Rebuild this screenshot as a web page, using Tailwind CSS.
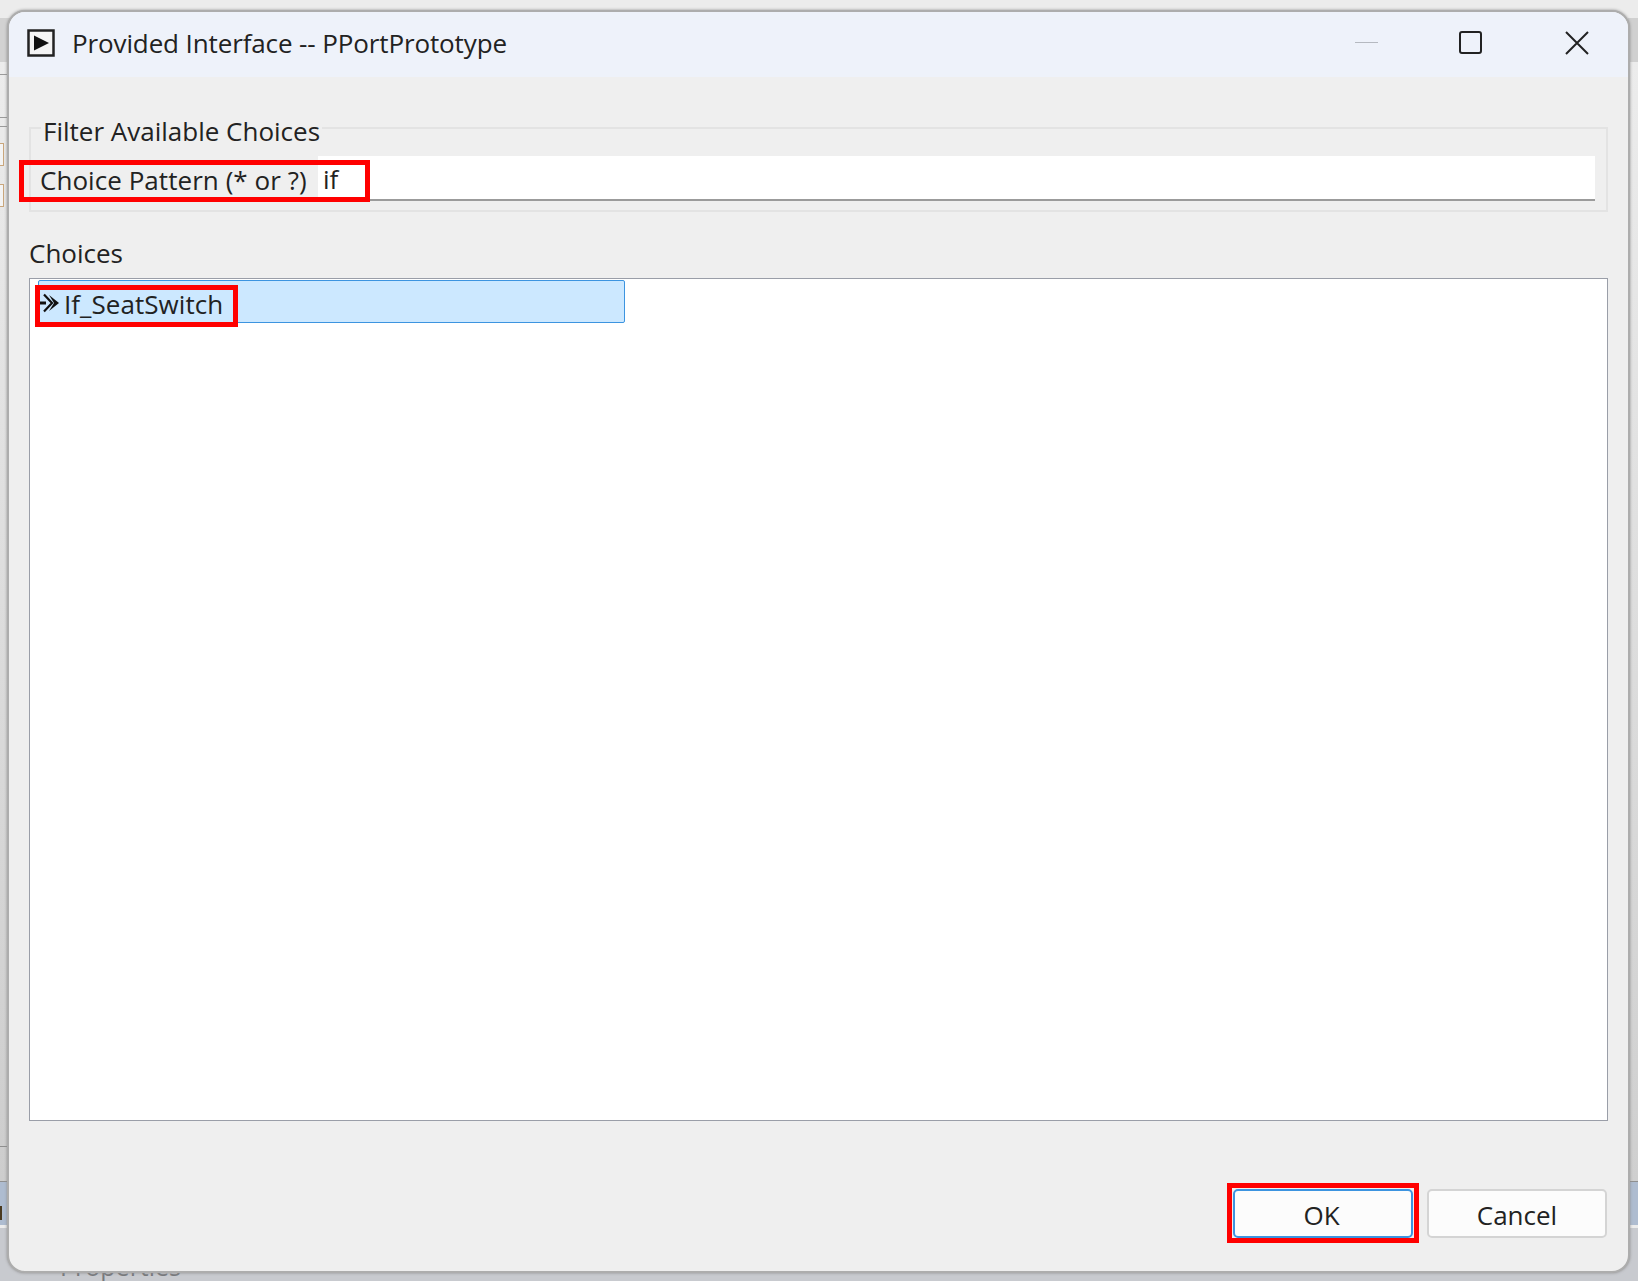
<!DOCTYPE html>
<html>
<head>
<meta charset="utf-8">
<script src="https://cdn.jsdelivr.net/npm/@tailwindcss/browser@4"></script>
</head>
<body class="m-0 overflow-hidden">
<div class="relative w-[1638px] h-[1281px] overflow-hidden bg-[#ececec] font-['Open_Sans',sans-serif] text-[#1a1a1a]">
  <!-- backdrop application peeking out round the window -->
  <div class="absolute left-0 top-[18px] w-[10px] h-[44px] bg-[#d2d2d2]"></div>
  <div class="absolute right-0 top-[18px] w-[10px] h-[44px] bg-[#d0d0d0]"></div>
  <div class="absolute left-0 top-[62px] w-[8px] h-[1120px] bg-linear-to-b from-[#ececec] to-[#cdcdcd]"></div>
  <div class="absolute right-0 top-[62px] w-[10px] h-[1120px] bg-linear-to-b from-[#ececec] to-[#cfcfcf]"></div>
  <div class="absolute left-0 top-[74px] w-[8px] h-[1px] bg-[#9a9a9a]"></div>
  <div class="absolute left-0 top-[117px] w-[8px] h-[1px] bg-[#9a9a9a]"></div>
  <div class="absolute left-0 top-[126px] w-[8px] h-[1px] bg-[#9a9a9a]"></div>
  <div class="absolute left-0 top-[143px] w-[4px] h-[23px] border border-l-0 border-[#c9a67c] bg-[#f4f4f4]"></div>
  <div class="absolute left-0 top-[184px] w-[4px] h-[23px] border border-l-0 border-[#c9a67c] bg-[#f4f4f4]"></div>
  <div class="absolute left-0 top-[1146px] w-[8px] h-[1px] bg-[#8f8f8f]"></div>
  <div class="absolute left-0 right-0 top-[1181px] h-[1px] bg-[#8f8f8f]"></div>
  <div class="absolute left-0 right-0 top-[1182px] h-[43px] bg-[#aebcd0]"></div>
  <div class="absolute left-0 top-[1206px] w-[2px] h-[14px] bg-[#4a3a20]"></div>
  <div class="absolute left-0 right-0 top-[1228px] bottom-0 bg-[#c8cacf]"></div>
  <div class="absolute left-[60px] top-[1251px] text-[25px] leading-[30px] whitespace-nowrap text-[#77797d]">Properties</div>

  <!-- dialog window -->
  <div class="absolute left-[7px] top-[10px] w-[1623px] h-[1263px] rounded-[18px] border-2 border-[#adadad] bg-[#efefef] overflow-hidden flex flex-col shadow-[0_0_3px_#8f8f8f]">
    <div class="h-[65px] shrink-0 bg-[#eef2fa] flex items-center pl-[18px] pb-[4px]">
      <svg width="28" height="28" viewBox="0 0 28 28" class="shrink-0">
        <rect x="1.5" y="1.5" width="25" height="25" fill="#f4f4f4" stroke="#222" stroke-width="2.5"/>
        <path d="M7 6.5 L22 14 L7 21.5 Z" fill="#111"/>
      </svg>
      <span class="ml-[17px] text-[26px] leading-[34px] tracking-[-0.12px] text-[#222]">Provided Interface -- PPortPrototype</span>
      <div class="ml-auto flex items-center h-full">
        <div class="w-[23px] h-[1px] bg-[#b5b9c0] mr-[81px]"></div>
        <div class="w-[23px] h-[23px] rounded-[3px] border-[2.5px] border-[#222] mr-[83px]"></div>
        <svg width="24" height="24" viewBox="0 0 24 24" class="mr-[39px]"><path d="M1 1 L23 23 M23 1 L1 23" stroke="#222" stroke-width="2" fill="none"/></svg>
      </div>
    </div>

    <div class="flex-1 flex flex-col px-[20px] relative">
      <!-- group box -->
      <fieldset class="mt-[34px] h-[101px] border-2 border-[#e3e3e3] pl-[10px] m-0 shrink-0">
        <legend class="relative top-[3px] text-[26px] leading-[34px] px-[2px] text-[#222]">Filter Available Choices</legend>
      </fieldset>
      <div class="absolute left-[20px] right-[20px] top-[79px] h-[45px] flex">
        <div class="w-[289px] pl-[11px] text-[26px] leading-[48px] tracking-[0.05px] text-[#222] whitespace-nowrap">Choice Pattern (* or ?)</div>
        <div class="flex-1 mr-[13px] bg-white border-b-2 border-[#9b9b9b] pl-[5px] text-[26px] leading-[46px] text-[#222]">if</div>
      </div>
      <div class="absolute left-[10px] top-[83px] w-[351px] h-[42px] border-[5px] border-[#ff0000]"></div>

      <div class="mt-[24px] mb-[1px] text-[26px] leading-[34px] text-[#222]">Choices</div>
      <div class="mt-[7px] h-[843px] bg-white border border-[#9a9ea8] relative shrink-0 pl-[8px] pt-[1px]">
        <div class="w-[587px] h-[43px] bg-[#cce8ff] border border-[#3c94e0] rounded-[2px]"></div>
        <div class="absolute left-[5px] top-[6px] w-[203px] h-[42px] border-[5px] border-[#ff0000] flex items-center">
          <svg width="21" height="20" viewBox="0 0 21 20" class="shrink-0 -mt-[7px]">
            <path d="M0 10 H6" stroke="#111" stroke-width="3"/>
            <path d="M4 1.5 L12 10 L4 18.5" stroke="#111" stroke-width="2.2" fill="none"/>
            <path d="M9 2 L19 10 L9 18 L14 10 Z" fill="#111"/>
          </svg>
          <span class="ml-[3px] -mt-[4px] text-[26px] leading-[34px] tracking-[0.05px] text-[#222] whitespace-nowrap">If_SeatSwitch</span>
        </div>
      </div>

      <div class="flex justify-end mt-[68px] gap-[14px] pr-[1px]">
        <div class="relative w-[180px] h-[49px] bg-[#fcfcfc] border-2 border-[#3c94e0] rounded-[5px] flex items-center justify-center pt-[4px] pr-[3px] text-[26px] text-[#222]">OK
          <div class="absolute -left-[8px] -top-[8px] -right-[8px] -bottom-[7px] border-[5px] border-[#ff0000]"></div>
        </div>
        <div class="w-[180px] h-[49px] bg-[#fcfcfc] border-2 border-[#d4d4d4] rounded-[5px] flex items-center justify-center pt-[4px] text-[26px] text-[#222]">Cancel</div>
      </div>
    </div>
  </div>
</div>
</body>
</html>
